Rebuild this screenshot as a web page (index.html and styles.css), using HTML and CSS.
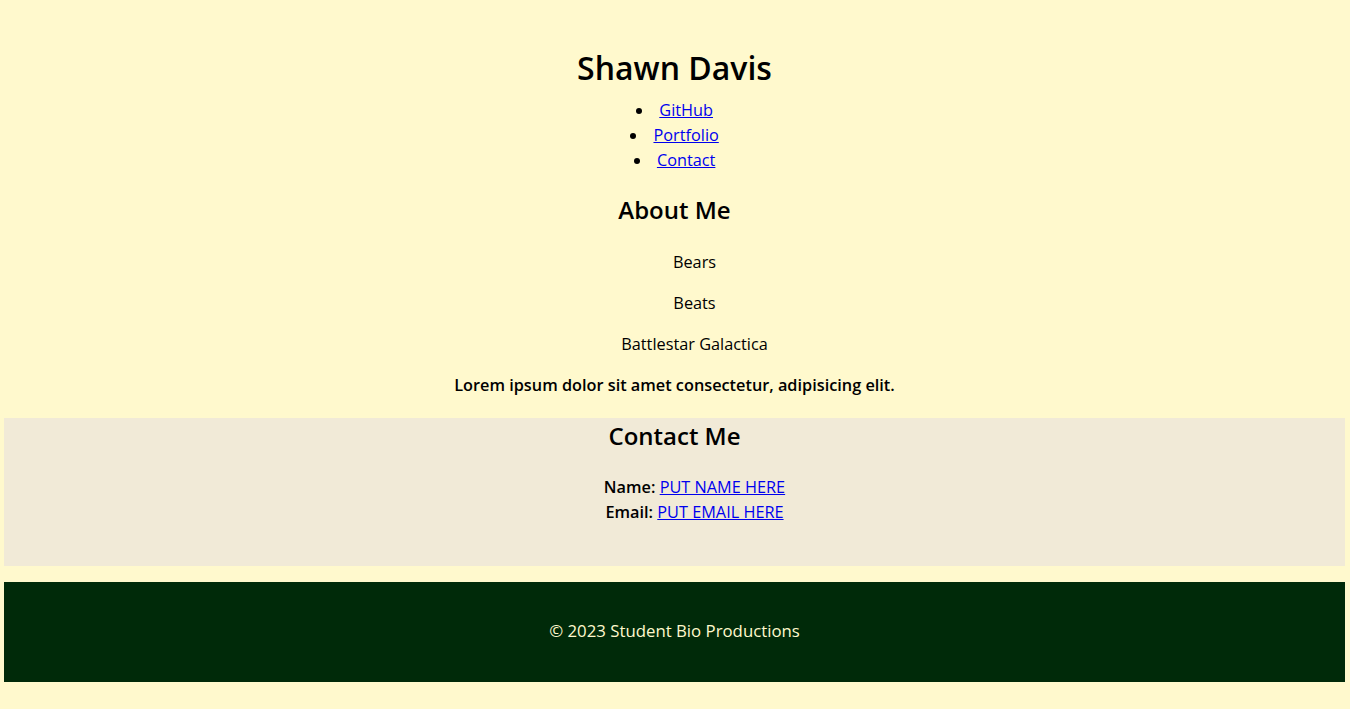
FILE: index.html
```html
<!DOCTYPE html>
<html lang="en">
<head>
<meta charset="utf-8">
<title>Shawn Davis</title>
<link rel="stylesheet" href="styles.css">
</head>
<body>
<header class="site-header">
  <h1 class="title">Shawn Davis</h1>
  <ul class="nav">
    <li><a href="#">GitHub</a></li>
    <li><a href="#">Portfolio</a></li>
    <li><a href="#contact">Contact</a></li>
  </ul>
</header>
<main>
  <section class="about">
    <h2 class="heading">About Me</h2>
    <ul class="likes">
      <li>Bears</li>
      <li>Beats</li>
      <li>Battlestar Galactica</li>
    </ul>
    <p class="lorem">Lorem ipsum dolor sit amet consectetur, adipisicing elit.</p>
  </section>
  <section class="contact" id="contact">
    <h2 class="heading">Contact Me</h2>
    <ul class="contact-list">
      <li><strong class="label">Name:</strong> <a href="#">PUT NAME HERE</a></li>
      <li><strong class="label">Email:</strong> <a href="#">PUT EMAIL HERE</a></li>
    </ul>
  </section>
</main>
<footer class="footer">
  <p>© 2023 Student Bio Productions</p>
</footer>
</body>
</html>
```

FILE: styles.css
```css
html {
  background: #fff9cd;
}
body {
  margin: 0 5px 0 4px;
  padding: 27px 0 27px;
  font-family: "Open Sans", "DejaVu Sans", sans-serif;
  font-size: 16.3px;
  line-height: 25px;
  color: #000;
  text-align: center;
}
.title {
  font-size: 32px;
  font-weight: 600;
  line-height: 38px;
  margin: 22px 0 0;
}
.nav {
  list-style: disc inside;
  margin: 11px 0 0;
  padding: 0;
}
a {
  color: #0000ee;
}
.heading {
  font-size: 24px;
  font-weight: 600;
  line-height: 30px;
  margin: 22px 0 0;
}
.likes {
  list-style: none;
  margin: 0;
  padding: 9px 0 0 40px;
}
.likes li {
  margin: 16px 0;
}
.lorem {
  font-weight: 600;
  margin: 16px 0 20px;
}
.contact {
  background: #f1ead7;
  padding: 3px 0 41px;
}
.contact .heading {
  margin: 0;
}
.contact-list {
  list-style: none;
  margin: 24px 0 0;
  padding: 0 0 0 40px;
}
.label {
  font-weight: 600;
}
.footer {
  background: #002a09;
  color: #fff9cd;
  margin-top: 16px;
  height: 100px;
  display: flex;
  align-items: center;
  justify-content: center;
  font-size: 16.8px;
}
.footer p {
  margin: 0;
  padding-bottom: 4px;
}
```
